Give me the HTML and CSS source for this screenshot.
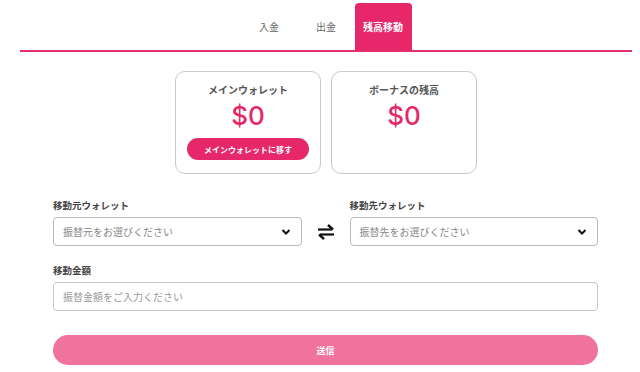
FILE: index.html
```html
<!DOCTYPE html>
<html lang="ja">
<head>
  <meta charset="UTF-8">
  <meta name="viewport" content="width=device-width, initial-scale=1.0">
  <title>残高移動</title>
  <link rel="stylesheet" href="styles.css">
</head>
<body>
  <div class="page">
    <!-- タブ -->
    <div class="tabs">
      <div class="tab">入金</div>
      <div class="tab">出金</div>
      <div class="tab active">残高移動</div>
    </div>

    <!-- 残高カード -->
    <div class="cards">
      <div class="card">
        <p class="card-title">メインウォレット</p>
        <p class="card-amount">$0</p>
        <button type="button" class="card-button">メインウォレットに移す</button>
      </div>
      <div class="card">
        <p class="card-title">ボーナスの残高</p>
        <p class="card-amount">$0</p>
      </div>
    </div>

    <form class="transfer-form">
      <div class="wallet-row">
        <div class="field">
          <label>移動元ウォレット</label>
          <div class="select">
            <span>振替元をお選びください</span>
            <svg class="chevron" width="10" height="8" viewBox="0 0 10 8"><path d="M1.5 2 L5 5.5 L8.5 2" fill="none" stroke="#111" stroke-width="2"/></svg>
          </div>
        </div>
        <div class="swap">
          <svg width="20" height="16" viewBox="0 0 20 16">
            <path d="M2 5.5 H16" stroke="#111" stroke-width="2.2" fill="none"/>
            <path d="M12 1 L17 5.5" stroke="#111" stroke-width="2.4" fill="none"/>
            <path d="M18 10.5 H4" stroke="#111" stroke-width="2.2" fill="none"/>
            <path d="M8 15 L3 10.5" stroke="#111" stroke-width="2.4" fill="none"/>
          </svg>
        </div>
        <div class="field">
          <label>移動先ウォレット</label>
          <div class="select">
            <span>振替先をお選びください</span>
            <svg class="chevron" width="10" height="8" viewBox="0 0 10 8"><path d="M1.5 2 L5 5.5 L8.5 2" fill="none" stroke="#111" stroke-width="2"/></svg>
          </div>
        </div>
      </div>

      <div class="field amount">
        <label>移動金額</label>
        <input type="text" placeholder="振替金額をご入力ください">
      </div>

      <button type="button" class="submit">送信</button>
    </form>
  </div>
</body>
</html>
```

FILE: styles.css
```css
/* 基本 */
body {
  margin: 0;
  font-family: "Noto Sans CJK JP", "Noto Sans", sans-serif;
  background-color: #ffffff;
  color: #444;
}

.page {
  width: 612px;
  margin-left: 20px;
}

/* タブ */
.tabs {
  display: flex;
  justify-content: center;
  padding-top: 3px;
  border-bottom: 2px solid #e3306b;
}

.tab {
  width: 57px;
  height: 47px;
  display: flex;
  justify-content: center;
  align-items: center;
  font-size: 10px;
  color: #666;
}

.tab.active {
  background-color: #e6286b;
  color: #ffffff;
  font-weight: bold;
  border-radius: 4px 4px 0 0;
}

/* 残高カード */
.cards {
  display: flex;
  justify-content: center;
  gap: 10px;
  margin-top: 19px;
}

.card {
  width: 144px;
  height: 101px;
  border: 1px solid #c9c9c9;
  border-radius: 10px;
  display: flex;
  flex-direction: column;
  align-items: center;
}

.card-title {
  margin: 10px 0 0;
  font-size: 10px;
  font-weight: bold;
  color: #555;
}

.card-amount {
  margin: 3px 0 0;
  font-family: "Inter", "Noto Sans", sans-serif;
  font-size: 26px;
  font-weight: 500;
  line-height: 32px;
  color: #e6286b;
}

.card-button {
  margin-top: 6px;
  width: 122px;
  height: 22px;
  border: none;
  border-radius: 11px;
  background-color: #e6286b;
  color: #ffffff;
  font-family: inherit;
  font-size: 8px;
  font-weight: bold;
  padding: 0;
}

/* フォーム */
.transfer-form {
  padding: 0 34px 0 33px;
  margin-top: 24px;
}

.wallet-row {
  display: flex;
  align-items: flex-end;
}

.field {
  flex: 1;
  display: flex;
  flex-direction: column;
}

.field label {
  font-size: 9.5px;
  font-weight: bold;
  color: #444;
  height: 14px;
  line-height: 14px;
  margin-bottom: 5px;
}

.select {
  height: 27px;
  border: 1px solid #b9b9b9;
  border-radius: 4px;
  display: flex;
  justify-content: space-between;
  align-items: center;
  padding: 0 10px 0 9px;
  font-size: 10px;
  color: #888;
}

.swap {
  width: 48px;
  height: 29px;
  display: flex;
  justify-content: center;
  align-items: center;
}

.amount {
  margin-top: 17px;
}

.amount input {
  height: 27px;
  border: 1px solid #c6c6c6;
  border-radius: 4px;
  padding: 0 9px;
  font-family: inherit;
  font-size: 10px;
  margin: 0;
}

.amount input::placeholder {
  color: #999;
}

.submit {
  width: 100%;
  height: 30px;
  margin-top: 24px;
  border: none;
  border-radius: 15px;
  background-color: #ef739c;
  color: #ffffff;
  font-family: inherit;
  font-size: 9px;
  font-weight: bold;
}
```
